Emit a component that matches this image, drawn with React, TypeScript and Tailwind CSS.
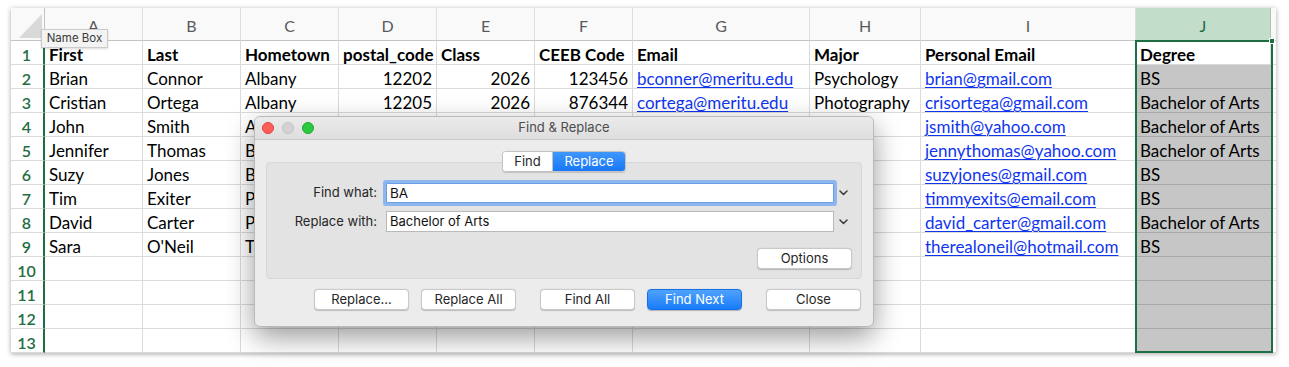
import React from "react";

type Cell = { t: string; link?: boolean; num?: boolean; bold?: boolean };

const L = (t: string): Cell => ({ t, link: true });
const N = (t: string): Cell => ({ t, num: true });
const T = (t: string): Cell => ({ t });
const E: Cell = { t: "" };

const headerRow: Cell[] = [
  "First",
  "Last",
  "Hometown",
  "postal_code",
  "Class",
  "CEEB Code",
  "Email",
  "Major",
  "Personal Email",
  "Degree",
].map((t) => ({ t, bold: true }));

const data: Cell[][] = [
  headerRow,
  [T("Brian"), T("Connor"), T("Albany"), N("12202"), N("2026"), N("123456"), L("bconner@meritu.edu"), T("Psychology"), L("brian@gmail.com"), T("BS")],
  [T("Cristian"), T("Ortega"), T("Albany"), N("12205"), N("2026"), N("876344"), L("cortega@meritu.edu"), T("Photography"), L("crisortega@gmail.com"), T("Bachelor of Arts")],
  [T("John"), T("Smith"), T("Albany"), E, E, E, E, E, L("jsmith@yahoo.com"), T("Bachelor of Arts")],
  [T("Jennifer"), T("Thomas"), T("Buffalo"), E, E, E, E, E, L("jennythomas@yahoo.com"), T("Bachelor of Arts")],
  [T("Suzy"), T("Jones"), T("Brooklyn"), E, E, E, E, E, L("suzyjones@gmail.com"), T("BS")],
  [T("Tim"), T("Exiter"), T("Poughkeepsie"), E, E, E, E, E, L("timmyexits@email.com"), T("BS")],
  [T("David"), T("Carter"), T("Plattsburgh"), E, E, E, E, E, L("david_carter@gmail.com"), T("Bachelor of Arts")],
  [T("Sara"), T("O'Neil"), T("Troy"), E, E, E, E, E, L("therealoneil@hotmail.com"), T("BS")],
  [E, E, E, E, E, E, E, E, E, E],
  [E, E, E, E, E, E, E, E, E, E],
  [E, E, E, E, E, E, E, E, E, E],
  [E, E, E, E, E, E, E, E, E, E],
];

const letters = ["A", "B", "C", "D", "E", "F", "G", "H", "I", "J"];

const cellFont = { fontFamily: "Lato, 'Open Sans', sans-serif" };
const uiFont = { fontFamily: "Inter, Roboto, 'Liberation Sans', sans-serif" };

function Chevron() {
  return (
    <svg width="9" height="6" viewBox="0 0 9 6" className="block">
      <path d="M1 1 L4.5 4.5 L8 1" fill="none" stroke="#3a3a3a" strokeWidth="1.5" strokeLinecap="round" strokeLinejoin="round" />
    </svg>
  );
}

function Btn({ children, primary }: { children: React.ReactNode; primary?: boolean }) {
  return (
    <div
      className={
        primary
          ? "w-[95px] h-[21px] rounded-[4px] flex items-center justify-center text-[13px] text-white bg-gradient-to-b from-[#4fa3fd] to-[#167bf8] border border-[#1670e8] shadow-[0_0.5px_1px_rgba(0,0,0,0.25)]"
          : "w-[95px] h-[21px] rounded-[4px] flex items-center justify-center text-[13px] text-[#262626] bg-white border border-[#c9c9c9] shadow-[0_0.5px_1px_rgba(0,0,0,0.2)]"
      }
    >
      {children}
    </div>
  );
}

function Dialog() {
  return (
    <div
      className="absolute left-[243px] top-[108px] w-[620px] h-[211px] rounded-[6px] bg-[#ececec] border border-[#b9b9b9] shadow-[0_10px_28px_rgba(0,0,0,0.4)] overflow-hidden flex flex-col z-20"
      style={uiFont}
    >
      {/* title bar */}
      <div className="h-[23px] shrink-0 grid grid-cols-[1fr_auto_1fr] items-center bg-gradient-to-b from-[#ebebeb] to-[#dedede] border-b border-[#c9c9c9]">
        <div className="flex items-center gap-[8px] pl-[7px]">
          <div className="w-[12px] h-[12px] rounded-full bg-[#fd5f57] border border-[#e0443e]" />
          <div className="w-[12px] h-[12px] rounded-full bg-[#d3d3d3] border border-[#c1c1c1]" />
          <div className="w-[12px] h-[12px] rounded-full bg-[#2ac940] border border-[#1fa82f]" />
        </div>
        <div className="text-[13px] text-[#4d4d4d]">Find &amp; Replace</div>
        <div />
      </div>
      {/* body */}
      <div className="flex flex-col px-[11px] pt-[11px]">
        <div className="flex justify-center relative z-10">
          <div className="flex h-[21px] rounded-[4px] border border-[#c3c3c3] overflow-hidden shadow-[0_0.5px_1px_rgba(0,0,0,0.15)] text-[13px]">
            <div className="w-[50px] flex items-center justify-center bg-white text-[#262626] border-r border-[#c3c3c3]">Find</div>
            <div className="w-[72px] flex items-center justify-center bg-gradient-to-b from-[#3f97fc] to-[#1677f7] text-white">Replace</div>
          </div>
        </div>
        <div className="-mt-[10px] h-[117px] rounded-[4px] bg-[#e3e3e3] border border-[#d6d6d6] flex flex-col pt-[20px] text-[13px] text-[#262626]">
          <div className="flex items-center h-[20px]">
            <div className="w-[111px] pr-[1px] text-right">Find what:</div>
            <div className="ml-[8px] w-[448px] h-[20px] bg-white border border-[#6a9fe6] ring-[3px] ring-[#8db5ee] rounded-[1px] flex items-center pl-[3px] text-[13.5px] text-[#111]">
              BA
            </div>
            <div className="w-[19px] flex justify-center">
              <Chevron />
            </div>
          </div>
          <div className="flex items-center h-[21px] mt-[8px]">
            <div className="w-[111px] pr-[1px] text-right">Replace with:</div>
            <div className="ml-[8px] w-[448px] h-[21px] bg-white border border-[#b9b9b9] flex items-center pl-[3px] text-[13px] text-[#111]">
              Bachelor of Arts
            </div>
            <div className="w-[19px] flex justify-center">
              <Chevron />
            </div>
          </div>
          <div className="flex justify-end pr-[9px] mt-[16px]">
            <Btn>Options</Btn>
          </div>
        </div>
        <div className="flex justify-end mt-[10px] pr-[1px]">
          <Btn>Replace...</Btn>
          <div className="w-[12px]" />
          <Btn>Replace All</Btn>
          <div className="w-[24px]" />
          <Btn>Find All</Btn>
          <div className="w-[12px]" />
          <Btn primary>Find Next</Btn>
          <div className="w-[24px]" />
          <Btn>Close</Btn>
        </div>
      </div>
    </div>
  );
}

export default function App() {
  return (
    <div className="w-[1289px] h-[367px] bg-white pt-[8px] pl-[11px]">
      <div className="relative w-[1265px] h-[345px] bg-white shadow-[0_1px_5px_rgba(0,0,0,0.35)] overflow-visible" style={cellFont}>
        <div className="w-[1265px] h-[345px] overflow-hidden grid grid-cols-[34px_98px_98px_98px_98px_98px_98px_177px_111px_215px_135px_5px] grid-rows-[33px_repeat(13,24px)]">
          {/* header row */}
          <div className="relative bg-[#f9f9f9] border-b border-r border-[#c4c4c4]">
            <svg width="34" height="33" className="absolute inset-0">
              <polygon points="8,30 31,30 31,6" fill="#d9d9d9" />
            </svg>
          </div>
          {letters.map((l, i) => (
            <div
              key={l}
              className={
                i === 9
                  ? "bg-[#c3ddcb] border-b border-r border-[#a9c9b3] text-[#1f6b41] text-[16px] leading-[33px] pt-[1px] text-center"
                  : "bg-[#f9f9f9] border-b border-r border-b-[#c4c4c4] border-r-[#dedede] text-[#5a5a5a] text-[16px] leading-[33px] pt-[1px] text-center"
              }
            >
              {l}
            </div>
          ))}
          <div className="bg-[#f9f9f9] border-b border-[#c4c4c4]" />
          {/* body rows */}
          {data.map((row, r) => (
            <React.Fragment key={r}>
              <div className="border-b border-[#dadada] border-r-2 border-r-[#1f6e43] text-[#1f6e43] text-[16px] font-semibold pt-[2px] leading-[23px] text-center pr-[1px] overflow-hidden">
                {r + 1}
              </div>
              {row.map((c, ci) => {
                const isJ = ci === 9;
                const sel = isJ && r > 0;
                return (
                  <div
                    key={ci}
                    className={
                      (sel ? "bg-[#c6c6c6] border-b border-[#a8a8a8] " : "bg-white border-b border-r border-[#dadada] ") +
                      "h-[24px] pt-[2px] leading-[23px] text-[17px] whitespace-nowrap overflow-visible " +
                      (c.num ? "text-right pr-[4px] " : "pl-[4px] ") +
                      (c.bold ? "font-bold " : "") +
                      (c.link ? "text-[#1035f0] underline underline-offset-[2px] decoration-[1px] " : "text-black ")
                    }
                  >
                    {c.t}
                  </div>
                );
              })}
              <div className="bg-white border-b border-[#dadada]" />
            </React.Fragment>
          ))}
        </div>

        {/* selection border for column J */}
        <div className="absolute left-[1124px] top-[32px] w-[138px] h-[313px] border-2 border-[#1f6e43] pointer-events-none z-10" />
        <div className="absolute left-[1258px] top-[30px] w-[6px] h-[6px] bg-[#1f6e43] border border-white z-10" />

        {/* Name Box tooltip */}
        <div
          className="absolute left-[30px] top-[21px] w-[67px] h-[19px] bg-[#f3f3f3] border border-[#cbcbcb] shadow-[0_1px_2px_rgba(0,0,0,0.15)] flex items-center justify-center text-[11.5px] text-[#3a3a3a] z-10"
          style={uiFont}
        >
          Name Box
        </div>

        <Dialog />
      </div>
    </div>
  );
}
